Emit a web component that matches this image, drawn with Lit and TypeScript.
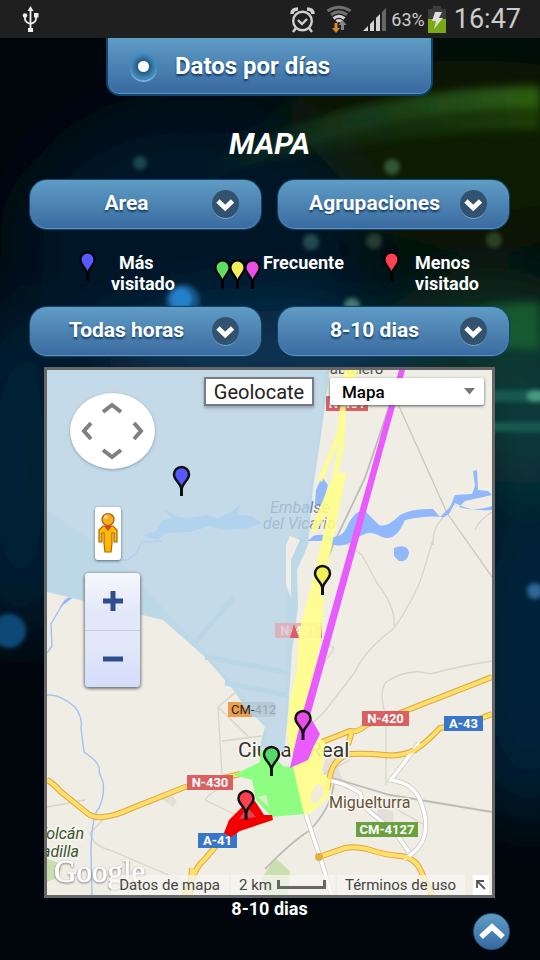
import { LitElement, html, svg, css } from "lit";
import { customElement, property, state } from "lit/decorators.js";

const pinShape = (x: number, y: number, fill: string) => svg`
  <g transform="translate(${x} ${y})">
    <path d="M0 29V19" stroke="#111" stroke-width="3"/>
    <path d="M0 22C-1 16-7.500 13-7.500 7.500A7.500 7.500 0 0 1 7.500 7.500C7.500 13 1 16 0 22Z" fill=${fill} stroke="#111" stroke-width="2.500"/>
  </g>`;

@customElement("map-pin")
class MapPin extends LitElement {
  @property() color = "#55f";
  static styles = css`
    :host { display: block; flex: none; }
    svg { display: block; width: 15px; height: 32px; overflow: visible; }
  `;
  render() {
    return html`<svg viewBox="0 0 15 32" aria-hidden="true">
      <path d="M7.500 29V19" stroke="#000" stroke-width="3"/>
      <path d="M7.500 22C6.500 16 .5 13 .5 7.500A7 7 0 0 1 14.500 7.500C14.500 13 8.500 16 7.500 22Z" fill=${this.color} stroke="#000" stroke-width="2"/>
    </svg>`;
  }
}

@customElement("status-bar")
class StatusBar extends LitElement {
  static styles = css`
    :host { display: flex; align-items: center; height: 38px; padding: 0 19px 0 21px; background: #1f1f1f; color: #ccc; }
    svg { display: block; flex: none; }
    .usb { margin-right: auto; }
    .alarm { margin-right: 11px; }
    .wifi { margin-right: 10px; }
    .signal { margin-right: 4px; }
    .pct { font-size: 18px; margin-right: 3px; }
    .clock { font-size: 27px; margin-left: 8px; }
  `;
  render() {
    return html`
      <svg class="usb" width="19" height="28" viewBox="0 0 19 28" fill="none" stroke="#eee" stroke-width="1.800">
        <path d="M9.500 5V24M4 11V14Q4 17 9.500 19M15 11V14Q15 17 9.500 19"/>
        <path d="M9.500 1L12.500 6H6.500Z" fill="#eee" stroke="none"/>
        <circle cx="4" cy="10.500" r="2.300" fill="#eee" stroke="none"/>
        <path d="M13 8h4.500v4.500H13ZM7 23h5v4H7Z" fill="#eee" stroke="none"/>
      </svg>
      <svg class="alarm" width="25" height="27" viewBox="0 0 25 27" fill="none" stroke="#d0d0d0" stroke-width="2.400">
        <circle cx="12.500" cy="15" r="9.300"/>
        <path d="M8 14L12 18L17 13"/>
        <path d="M2 8Q2 3 8 3M23 8Q23 3 17 3" stroke-width="3.600"/>
        <path d="M6 22L3 26M19 22L22 26"/>
      </svg>
      <svg class="wifi" width="26" height="28" viewBox="0 0 26 28" fill="none" stroke-width="3">
        <path d="M1.500 6Q13-1.500 24.500 6M5 9.800Q13 4 21 9.800" stroke="#707070"/>
        <path d="M7.500 13.500Q13 9 18.500 13.500M10.500 16.500Q13 14.500 15.500 16.500" stroke="#d0d0d0"/>
        <path d="M8.500 18h3v5h2.500l-4 5-4-5h2.500Z" fill="#d98a2b"/>
        <path d="M15 25h3v-5h2.500l-4-5-4 5H15Z" fill="#858585"/>
      </svg>
      <svg class="signal" width="25" height="25" viewBox="0 0 25 25" fill="#d4d4d4">
        <path d="M1 24L6 19V24ZM8 24V17L12 13V24ZM14 24V11L18 7V24Z"/>
        <path d="M20 24V5L24 1V24Z" fill="#666"/>
      </svg>
      <span class="pct">63%</span>
      <svg width="18" height="27" viewBox="0 0 18 27">
        <path d="M5 0h8v3h5v10H0V3h5Z" fill="#3d3d3d"/>
        <path d="M0 13h18v14H0Z" fill="#78aa16"/>
        <path d="M7 6h7l-3 6h4L6 23l2-8H4Z" fill="#ddd"/>
      </svg>
      <span class="clock">16:47</span>
    `;
  }
}

@customElement("pill-select")
class PillSelect extends LitElement {
  @property() label = "";
  @property({ attribute: false }) options: string[] = [];
  static styles = css`
    :host { display: block; position: relative; }
    select {
      appearance: none; display: block; box-sizing: border-box; width: 100%; height: 51px; margin: 0;
      padding: 0 38px 3px 0; border: 1px solid #0e4469; border-radius: 18px;
      background: linear-gradient(#5f9cc5, #3a6aa0); box-shadow: inset 0 -1px #5e93c2, 0 0 1px #0b3551;
      color: #fff; font: bold 21px Roboto, sans-serif; text-align: center; text-align-last: center;
      text-shadow: 0 2px 2px #153d66;
    }
    option { background: #3a6aa0; }
    svg { position: absolute; right: 23px; top: 11px; width: 27px; height: 29px; pointer-events: none; }
  `;
  render() {
    return html`
      <select aria-label=${this.label}>${this.options.map((o) => html`<option>${o}</option>`)}</select>
      <svg viewBox="0 0 27 29" aria-hidden="true">
        <ellipse cx="13.500" cy="14.800" rx="13.200" ry="14" fill="#8db4d6"/>
        <ellipse cx="13.500" cy="14" rx="13.500" ry="14" fill="#32526f"/>
        <path d="M6 11L13.200 18L20.500 11" fill="none" stroke="#fff" stroke-width="4.800" stroke-linejoin="miter"/>
      </svg>`;
  }
}

const shield = (x: number, y: number, w: number, text: unknown, fill: string, ink = "#fff", weight = "bold") => svg`
  <rect x=${x} y=${y} width=${w} height="15" fill=${fill}/>
  <text x=${x + w / 2} y=${y + 12} font-size="13" font-weight=${weight} fill=${ink} text-anchor="middle">${text}</text>`;

const mainRoads = [
  "M47 780Q53 783 60 791L87 813Q93 818 103 817Q115 816 130 809L185 787L240 774",
  "M185 895L194 875Q197 866 205 859L228 832L240 815",
  "M190 895L192 868",
  "M322 742L350 731Q358 733 366 725L400 713L492 677M352 731L348 745",
  "M492 714Q468 724 440 728Q426 743 415 750Q400 757 385 755Q365 753 350 754Q335 758 331 772Q328 785 327 790",
  "M319 857L345 848Q355 846 367 849Q385 855 400 856Q414 857 420 869L432 895",
];
const whiteRoads = ["M331 781Q345 783 360 793Q363 806 370 812L395 832L409 852", "M419 743L391 780Q413 783 420 800Q431 826 421 844Q415 853 404 859", "M306 815L320 857L332 895"];

@customElement("route-map")
class RouteMap extends LitElement {
  static styles = css`
    :host { display: block; position: relative; border: 3px solid #666; background: #f0ede5; overflow: hidden; }
    .canvas { display: block; width: 100%; aspect-ratio: 445 / 525; }
    .logo { filter: drop-shadow(0 1px 1px #777); }
    button, select { margin: 0; padding: 0; border: 0; background: none; font-family: Roboto, sans-serif; }
    .locate {
      position: absolute; top: 7px; right: 178px; width: 110px; height: 29px; border: 2px solid #757b8b;
      background: #fff; font-size: 20px; line-height: 24px; color: #222; box-shadow: 0 2px 3px #7779;
    }
    .kind { position: absolute; top: 8px; right: 8px; width: 154px; height: 27px; background: #fff; border-radius: 2px; box-shadow: 0 1px 3px #555; }
    .kind select { appearance: none; width: 100%; height: 100%; padding-left: 12px; font-size: 17px; font-weight: 500; color: #000; }
    .kind svg { position: absolute; right: 9px; top: 10px; pointer-events: none; }
    .controls { position: absolute; top: 23px; left: 23px; width: 85px; display: flex; flex-direction: column; align-items: center; }
    .pan {
      display: grid; grid-template-columns: repeat(3, 1fr); grid-template-rows: repeat(3, 1fr); width: 85px; height: 76px;
      padding: 4px; box-sizing: border-box; border-radius: 50%; background: #fff; box-shadow: 0 1px 3px #6789;
    }
    .pan button { display: grid; place-items: center; }
    .n { grid-area: 1 / 2; } .w { grid-area: 2 / 1; } .e { grid-area: 2 / 3; } .s { grid-area: 3 / 2; }
    .pan path { fill: none; stroke: #808080; stroke-width: 4; }
    .pegman { width: 26px; height: 53px; margin: 38px 10px 13px 0; border-radius: 3px; background: #fff; box-shadow: 0 1px 3px #567; display: grid; place-items: center; }
    .zoom { width: 55px; height: 114px; border-radius: 4px; background: linear-gradient(#f6f7fd, #e2e7f9 35%, #e2e7f9 65%, #d3ddfb); box-shadow: 0 1px 3px 1px #777; display: flex; flex-direction: column; }
    .zoom button { flex: 1; display: grid; place-items: center; }
    .zoom button + button { border-top: 1px solid #c5cce6; }
    .zoom path { stroke: #2e4d8e; stroke-width: 5; }
    .credits { position: absolute; left: 0; right: 0; bottom: 0; display: flex; justify-content: flex-end; align-items: center; height: 20px; gap: 2px; font-size: 15px; color: #444; white-space: nowrap; }
    .credits > * { display: flex; align-items: center; height: 20px; background: #f6f5f0bb; box-sizing: border-box; }
    .credits a { color: inherit; text-decoration: none; padding: 0 9px 0 8px; }
    .scale { padding: 0 9px 0 8px; gap: 5px; }
    .credits .expand { width: 16px; margin: 0 3px 0 6px; background: #fff; justify-content: center; }
  `;
  render() {
    return html`
      <svg class="canvas" viewBox="47 370 445 525" preserveAspectRatio="xMidYMid slice" font-family="Roboto, sans-serif" role="img" aria-label="Mapa de Ciudad Real">
        <path fill="#f0ede5" d="M47 370H492V895H47Z"/>
        <path fill="#cbdfae" d="M47 859Q60 861 62 869L57 878L47 882ZM265 895L262 878L275 858L290 871L288 895Z"/>
        <g fill="#e4dfd8"><path d="M160 798L170 792L177 802L173 807ZM330 748L344 755L338 768L345 786L333 783L322 770ZM378 805L394 812L392 832L376 822Z"/></g>
        <g fill="none" stroke="#d8d4c8" stroke-width="1.300">
          <path d="M347 544L362 555L377 583Q396 607 394 627M433 540L420 582Q405 615 392 630Q365 650 355 672L325 711L306 730M492 661Q465 665 430 674Q410 667 386 682Q378 693 386 715V785M492 512Q480 519 475 530M447 514Q432 526 433 545M320 640L334 648L320 670"/>
          <path d="M398 404L447 513L492 577" stroke="#c9c6bb"/>
          <path d="M218 707L250 680M218 707L222 774M218 707L250 738M222 741L262 736M47 807L85 800M103 820L90 833Q93 846 110 850L180 880M205 800Q210 792 224 787M205 800L240 817M275 800L350 760M380 800L423 824"/>
        </g>
        <g fill="none" stroke="#bdbbb6" stroke-width="1.800">
          <path d="M390 404L365 478L333 545L322 575"/>
          <path d="M333 778L390 795L492 812M265 869Q290 843 310 830Q332 807 334 782"/>
        </g>
        <g fill="none" stroke="#9ebef5" stroke-width="1.300">
          <path d="M65 600L51 624L52 646L47 653M47 695Q60 694 75 707Q83 718 81 728L84 752Q102 764 99 772L103 782Q105 795 99 808Q92 815 91 850L92 895"/>
        </g>
        <path fill="#90b8fb" d="M75 596L62 606L59 608L67 598ZM394 548Q408 543 409 553Q407 563 399 561L394 556ZM290 535Q308 545 313 536Q322 533 332 537Q344 537 348 524Q356 510 364 510Q370 516 379 525Q387 528 400 515Q412 508 433 509L440 517L450 507L455 495L472 494L475 486L473 471L477 470L478 490L488 491L492 495L465 501L459 507Q473 512 492 506V510Q471 512 455 503L449 514L444 517Q425 515 405 520Q395 544 380 536Q367 528 354 541Q337 550 328 541L303 541L299 552L290 541Z"/>
        <path fill="#90b8fb" d="M316 490L322 477L328 485L322 506L315 504Z"/>
        <text x="320" y="374" font-size="15" fill="#55504b">Caballero</text>

        ${mainRoads.map((d) => svg`<path d=${d} fill="none" stroke="#dda839" stroke-width="6"/>`)}
        ${whiteRoads.map((d) => svg`<path d=${d} fill="none" stroke="#cbc8c1" stroke-width="5"/><path d=${d} fill="none" stroke="#fff" stroke-width="3.500"/>`)}
        ${mainRoads.map((d) => svg`<path d=${d} fill="none" stroke="#fedf6b" stroke-width="4"/>`)}
        <circle cx="319" cy="857" r="4" fill="#e5b03e"/>

        ${shield(326, 396, 42, "N-401", "#d95f60")}
        ${shield(187, 775, 46, "N-430", "#d95f60")}
        ${shield(362, 711, 47, "N-420", "#d95f60")}
        ${shield(444, 716, 39, "A-43", "#3975c8")}
        ${shield(198, 833, 39, "A-41", "#3975c8")}
        ${shield(356, 822, 62, "CM-4127", "#69a140")}
        <g fill="#333" stroke="#f8f6f1" stroke-width="3" paint-order="stroke">
          <text x="238" y="757" font-size="21">Ciudad Real</text>
          <text x="329" y="808" font-size="16" fill="#655238">Miguelturra</text>
          <g font-size="16" font-style="italic" fill="#37532a"><text x="84" y="839" text-anchor="end">Volcán</text><text x="79" y="857" text-anchor="end">Cabezadilla</text></g>
        </g>

        <path fill="#b9d8e7" fill-opacity=".95" d="M47 370H330L320 442L313 488L308 545L297 570L298 607L292 650L288 713L284 752L260 748L262 737L265 727L240 700L235 692L205 657L163 620L47 592Z"/>
        <path fill="#c4dae8" d="M47 370H326L318 442L302 530L287 560L286 700L284 750L265 745L266 727L245 698L210 657L120 562L47 509Z"/>
        <path fill="#f0ede5" d="M290 536L300 540L291 560V598L286 585V545Z"/>
        <path fill="#b2d3ed" d="M142 535L155 532L163 520L172 518L162 508L178 517Q192 519 206 515L218 518L233 511L240 505L236 515L252 516L262 523L248 528L225 530L210 526L190 532L165 533L158 540Z"/>
        <path fill="none" stroke="#b9d7e6" stroke-width="5" d="M195 643L234 597M205 657L287 672M225 683L287 695"/>
        <path fill="none" stroke="#b4d0ec" stroke-width="1.500" d="M162 541L142 542L136 553L128 560L122 560"/>
        <g font-size="16" font-style="italic" fill="#a2bdd4">
          <text x="270" y="513">Emba<tspan fill="#6b86ad">lse</tspan></text>
          <text x="263" y="529">del Vic<tspan fill="#6b86ad">ario</tspan></text>
        </g>
        ${shield(275, 623, 47, svg`N-<tspan fill="#fbf3e0">401</tspan>`, "#d9b4bd", "#e6cfd8")}
        <path fill="#da5f5f" d="M294 624L299 638H290ZM320 623h2v15h-2Z"/>
        <rect x="228" y="702" width="47" height="15" fill="#b9ccd6"/>
        ${shield(228, 702, 24, "", "#ee9f4b")}
        <path fill="#b9ccd6" d="M240 702H253V717Z"/>
        <text x="231" y="714" font-size="13" fill="#222">CM-<tspan fill="#94a9b5">412</tspan></text>

        <path fill="#fffe8b" fill-opacity=".9" d="M344 370H358L346 402L345 424L344 447L338 474L346 472L344 485L333 540L325 580L321 640L312 683L311 715L318 737L325 743L322 773L330 780L329 797L318 807L307 815L300 810L293 767L287 733L290 700L297 670L299 632L315 570L322 540L328 512L315 533L311 528L333 477L339 440L322 482L318 480L337 433L341 400Z"/>
        <path fill="#f1edd6" d="M318 784Q326 786 323 796Q317 805 311 803Q309 790 318 784Z"/>
        <path fill="#86ff79" fill-opacity=".92" d="M233 775L260 762V749L270 752L283 766L293 767L300 797L304 814L272 817L256 800L252 780Z"/>
        <path fill="#d9efc9" d="M258 797L266 795L269 807Z"/>
        <path fill="#e95bff" d="M399 370H405L310 716L312 720L320 734L313 748L308 760L290 768L295 745L303 712Z"/>
        <path fill="#f40000" d="M224 833L229 820L243 806L255 801L264 815L272 815L273 820L240 831L231 837Z"/>
        <path fill="#db4550" d="M239 819L247 807L256 817Z"/>

        ${pinShape(181.5, 467, "#5858ff")}
        ${pinShape(322.5, 566, "#f2ef57")}
        ${pinShape(303, 711, "#e54fe8")}
        ${pinShape(271.500, 747, "#55d867")}
        ${pinShape(246, 791, "#ff4052")}
        <text class="logo" x="54" y="882" font-family="Liberation Serif, serif" font-size="31" fill="#fff" stroke="#fff" stroke-width=".6">Google</text>
      </svg>

      <div class="controls">
        <div class="pan">
          <button class="n" aria-label="Norte"><svg width="20" height="12"><path d="M1 10L10 3L19 10"/></svg></button>
          <button class="w" aria-label="Oeste"><svg width="12" height="20"><path d="M10 2L3 10L10 18"/></svg></button>
          <button class="e" aria-label="Este"><svg width="12" height="20"><path d="M2 2L9 10L2 18"/></svg></button>
          <button class="s" aria-label="Sur"><svg width="20" height="12"><path d="M1 2L10 9L19 2"/></svg></button>
        </div>
        <button class="pegman" aria-label="Street View">
          <svg width="20" height="43" viewBox="0 0 20 43">
            <path d="M5 14H15L19 18V30H16V21H14V31L13 40H7L6 31V21H4V30H1V18Z" fill="#fdba00" stroke="#b36500" stroke-width="1.200"/>
            <circle cx="10" cy="7.500" r="6" fill="#f9ad17" stroke="#a95712" stroke-width="1.200"/>
            <path d="M6 14H14L10 19Z" fill="#d6442c"/><circle cx="8" cy="5" r="2" fill="#ffe08a"/>
          </svg>
        </button>
        <div class="zoom">
          <button aria-label="Acercar"><svg width="20" height="20"><path d="M0 10H20M10 0V20"/></svg></button>
          <button aria-label="Alejar"><svg width="20" height="20"><path d="M0 10H20"/></svg></button>
        </div>
      </div>

      <button class="locate">Geolocate</button>
      <div class="kind">
        <select aria-label="Tipo de mapa"><option>Mapa</option><option>Satélite</option></select>
        <svg width="11" height="7"><path d="M0 0H11L5.500 6.500Z" fill="#777"/></svg>
      </div>
      <div class="credits">
        <a href="#datos">Datos de mapa</a>
        <span class="scale">2 km<svg width="49" height="10"><path d="M1.500 0V7.500H47.500V0" fill="none" stroke="#666" stroke-width="3"/></svg></span>
        <a href="#terminos">Términos de uso</a>
        <button class="expand" aria-label="Ampliar"><svg width="10" height="10" fill="none" stroke="#555" stroke-width="1.800"><path d="M1 8V1H8M1 1L9 9"/></svg></button>
      </div>
    `;
  }
}

@customElement("app-root")
class AppRoot extends LitElement {
  @state() private period = "8-10 dias";
  static styles = css`
    :host { display: block; position: relative; isolation: isolate; min-height: 100vh; background: #00060c; color: #fff; font-family: Roboto, sans-serif; overflow: hidden; }
    .wallpaper { position: absolute; inset: 0; width: 100%; height: 100%; z-index: -1; }
    main { display: flex; flex-direction: column; padding: 0 30px 0 29px; }
    .mode {
      align-self: center; box-sizing: border-box; width: 68%; height: 58px; display: flex; align-items: center; gap: 18px; padding: 0 22px;
      border: 2px solid #0e4469; border-top: 0; border-radius: 0 0 14px 14px; background: linear-gradient(#5f9cc5, #3868a0);
      box-shadow: inset 0 -1px #5e93c2; font-size: 24px; font-weight: bold; text-shadow: 0 2px 2px #153d66;
    }
    .mode input { appearance: none; flex: none; width: 27px; height: 27px; margin: 0; border-radius: 50%; background: radial-gradient(circle, #fff 5px, #285a83 6px, #3f8abb 12px); box-shadow: 0 2px #7fadd5; }
    h1 { margin: 31px 0 18px; font-size: 30px; line-height: 34px; font-style: italic; text-align: center; }
    .row { display: grid; grid-template-columns: 1fr 1fr; gap: 15px; }
    .legend { display: grid; grid-template-columns: 167px 1fr 126px; height: 76px; box-sizing: border-box; padding: 22px 0 0; font-size: 18px; font-weight: bold; line-height: 21px; }
    .item { display: flex; text-align: center; }
    .most, .least { gap: 16px; }
    .most { padding-left: 51px; }
    .mid { gap: 3px; padding-left: 19px; }
    .trio { display: flex; padding-top: 8px; }
    route-map { margin: 10px 15px 0; }
    .caption { margin: 0; font-size: 18px; line-height: 22px; font-weight: bold; text-align: center; }
    .top { position: absolute; right: 30px; bottom: 10px; width: 37px; height: 37px; padding: 0; border: 1px solid #1c6189; border-radius: 50%; background: linear-gradient(#5f9cc5, #3868a0); display: grid; place-items: center; }
  `;
  private pickPeriod(e: Event) {
    const target = e.composedPath()[0] as HTMLSelectElement;
    if (target.value) this.period = target.value;
  }
  render() {
    return html`
      <svg class="wallpaper" viewBox="0 0 540 960" preserveAspectRatio="none" aria-hidden="true">
        <defs>
          <filter id="soft" x="-50%" y="-50%" width="200%" height="200%"><feGaussianBlur stdDeviation="32"/></filter>
          <filter id="edge" x="-20%" y="-50%" width="140%" height="200%"><feGaussianBlur stdDeviation="4"/></filter>
          <filter id="dot" x="-30%" y="-30%" width="160%" height="160%"><feGaussianBlur stdDeviation="2"/></filter>
          <linearGradient id="arc"><stop offset="0" stop-color="#153a25" stop-opacity="0"/><stop offset=".5" stop-color="#17381a"/><stop offset="1" stop-color="#2d5f10"/></linearGradient>
        </defs>
        <g filter="url(#soft)">
          <ellipse cx="470" cy="150" rx="230" ry="90" fill="#0b1d06"/>
          <ellipse cx="190" cy="240" rx="170" ry="130" fill="#031726"/>
          <ellipse cx="290" cy="360" rx="200" ry="50" fill="#0a3555"/>
          <ellipse cx="490" cy="330" rx="110" ry="50" fill="#0c3420"/>
          <ellipse cx="530" cy="430" rx="60" ry="80" fill="#083c40"/>
          <ellipse cx="20" cy="470" rx="60" ry="170" fill="#042039"/>
          <ellipse cx="530" cy="650" rx="80" ry="170" fill="#032238"/>
        </g>
        <path d="M200 165Q360 86 540 86V110Q380 108 200 185Z" fill="url(#arc)" filter="url(#edge)"/>
        <path d="M230 155Q390 110 540 110V130Q390 128 230 175Z" fill="url(#arc)" opacity=".5" filter="url(#edge)"/>
        <path d="M400 335Q470 302 540 302V350Q470 345 400 350Z" fill="#1d6a35" opacity=".7" filter="url(#edge)"/>
        <g filter="url(#dot)">
          <path d="M490 390H545V402H490ZM490 422H545V432H490Z" fill="#17594f"/>
          <ellipse cx="536" cy="396" rx="9" ry="6" fill="#469a80"/>
          <circle cx="183" cy="301" r="17" fill="#174f7b"/><circle cx="181" cy="299" r="11" fill="#2480c9"/>
          <circle cx="140" cy="163" r="7" fill="#1c4650"/><circle cx="392" cy="167" r="8" fill="#315436"/>
          <circle cx="311" cy="242" r="8" fill="#244b50"/><circle cx="374" cy="241" r="8" fill="#253a31"/><circle cx="494" cy="240" r="8" fill="#2a4224"/>
          <circle cx="352" cy="306" r="8" fill="#44776e"/><circle cx="9" cy="631" r="17" fill="#104a77"/><circle cx="535" cy="591" r="8" fill="#2f6699"/>
        </g>
      </svg>
      <status-bar></status-bar>
      <main>
        <label class="mode"><input type="radio" name="mode" checked>Datos por días</label>
        <h1>MAPA</h1>
        <div class="row">
          <pill-select label="Area" .options=${["Area"]}></pill-select>
          <pill-select label="Agrupaciones" .options=${["Agrupaciones"]}></pill-select>
        </div>
        <div class="legend">
          <div class="item most"><map-pin color="#5858ff"></map-pin><span>Más&nbsp;&nbsp;&nbsp;<br>visitado</span></div>
          <div class="item mid"><span class="trio"><map-pin color="#60dc63"></map-pin><map-pin color="#f3ef5c"></map-pin><map-pin color="#e94fe8"></map-pin></span><span>Frecuente</span></div>
          <div class="item least"><map-pin color="#ff4050"></map-pin><span>Menos&nbsp;&nbsp;<br>visitado</span></div>
        </div>
        <div class="row">
          <pill-select label="Horas" .options=${["Todas horas"]}></pill-select>
          <pill-select label="Periodo" .options=${["8-10 dias"]} @change=${this.pickPeriod}></pill-select>
        </div>
        <route-map></route-map>
        <p class="caption">${this.period}</p>
      </main>
      <button class="top" aria-label="Subir"><svg width="28" height="20"><path d="M3 15L14 5L25 15" fill="none" stroke="#fff" stroke-width="5.500"/></svg></button>
    `;
  }
}
